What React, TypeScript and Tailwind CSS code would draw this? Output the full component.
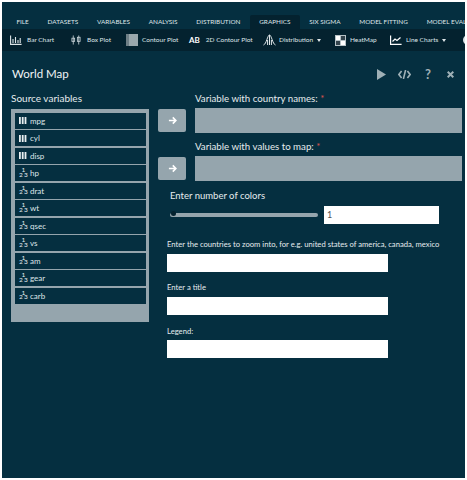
import React from "react";

const Bars = () => (
  <svg width="8" height="7" viewBox="0 0 8 7" className="shrink-0" fill="#e8eef0">
    <rect x="0" y="0" width="1.8" height="7" />
    <rect x="2.8" y="0" width="1.8" height="7" />
    <rect x="5.6" y="0" width="1.8" height="7" />
  </svg>
);

const Frac = () => (
  <span className="relative inline-block w-[8px] h-[10px] shrink-0 text-[6.5px] leading-none text-[#e8eef0]">
    <span className="absolute left-0 top-[3.5px]">2</span>
    <span className="absolute left-[2.5px] top-[-1px]">1</span>
    <span className="absolute left-[5px] top-[3.5px]">3</span>
  </span>
);

const Arrow = () => (
  <button className="w-[28px] h-[23px] mt-[1px] bg-[#95a5ad] rounded-[2px] flex items-center justify-center shrink-0">
    <svg width="9" height="9" viewBox="0 0 10 10" fill="none" stroke="#ffffff" strokeWidth="1.8">
      <path d="M1 5h7.5M5.3 1.6 8.7 5 5.3 8.4" />
    </svg>
  </button>
);

const tabs = ["FILE", "DATASETS", "VARIABLES", "ANALYSIS", "DISTRIBUTION", "GRAPHICS", "SIX SIGMA", "MODEL FITTING", "MODEL EVALUATION"];
const vars: [string, boolean][] = [
  ["mpg", true], ["cyl", true], ["disp", true], ["hp", false], ["drat", false], ["wt", false],
  ["qsec", false], ["vs", false], ["am", false], ["gear", false], ["carb", false],
];

const Tool = ({ icon, label, caret, w }: { icon: React.ReactNode; label: string; caret?: boolean; w: string }) => (
  <div className={`flex items-center shrink-0 ${w}`}>
    {icon}
    <span className="text-[6.5px] text-[#dfe6e9] whitespace-nowrap">{label}</span>
    {caret && <span className="ml-[4px] w-0 h-0 border-x-[2.5px] border-x-transparent border-t-[3px] border-t-[#dfe6e9]" />}
  </div>
);

export default function App() {
  return (
    <div className="w-[467px] h-[480px] bg-white p-[2px] overflow-hidden" style={{ fontFamily: "Lato, 'Open Sans', sans-serif" }}>
      <div className="w-[463px] h-[476px] bg-[#052f40] overflow-hidden text-[#e6ecee]">
        {/* tabs */}
        <div className="h-[27px] pt-[13px] pl-[5px] flex items-stretch text-[6.4px] whitespace-nowrap text-[#dfe6e9]">
          {tabs.map((t) => (
            <div
              key={t}
              className={`flex items-center px-[9.4px] shrink-0 rounded-t-[2px] ${t === "GRAPHICS" ? "bg-[#04222f]" : ""}`}
            >
              {t}
            </div>
          ))}
        </div>
        {/* toolbar */}
        <div className="h-[22px] bg-[#04222f] flex items-center pl-[8px] overflow-hidden">
          <Tool w="w-[61px]" label="Bar Chart" icon={
            <svg width="12" height="10" viewBox="0 0 12 10" className="mr-[5px]" fill="none" stroke="#dfe6e9" strokeWidth="1.1">
              <path d="M.6.5v8.9h11M3 8V4M5.5 8V2M8 8V5M10.2 8V3" />
            </svg>} />
          <Tool w="w-[55px]" label="Box Plot" icon={
            <svg width="10" height="10" viewBox="0 0 11 10" className="mr-[6px]" fill="none" stroke="#c9d4d8" strokeWidth=".9">
              <path d="M2.5 0v10M8.5 0v10" /><rect x="1" y="3" width="3" height="3.5" /><rect x="7" y="2" width="3" height="4.5" />
            </svg>} />
          <Tool w="w-[63px]" label="Contour Plot" icon={
            <span className="w-[12px] h-[12px] mr-[4px] bg-[#9aa7ac] shrink-0 border-l-[3px] border-[#6f7f86]" />} />
          <Tool w="w-[74px]" label="2D Contour Plot" icon={
            <span className="text-[8px] font-bold text-white mr-[6px]">AB</span>} />
          <Tool w="w-[72px]" label="Distribution" caret icon={
            <svg width="13" height="12" viewBox="0 0 13 12" className="mr-[3px]" fill="none" stroke="#dfe6e9" strokeWidth="1">
              <path d="M.5 11C3.5 10 4.5 1 6.5 1s3 9 6 10M4.6 11V6M8.4 11V6M6.5 11V1" />
            </svg>} />
          <Tool w="w-[55px]" label="HeatMap" icon={
            <span className="w-[11px] h-[11px] mr-[4px] bg-[#b7c2c6] shrink-0 grid grid-cols-2 gap-[1px] p-[1px]">
              <span className="bg-white" /><span className="bg-[#33434c]" /><span className="bg-[#33434c]" /><span className="bg-white" />
            </span>} />
          <Tool w="w-[73px]" label="Line Charts" caret icon={
            <svg width="12" height="10" viewBox="0 0 12 10" className="mr-[4px]" fill="none" stroke="#ffffff" strokeWidth="1.2">
              <path d="M.6.5v8.9h11M2.5 6.5l2.5-2.5 2 1.5 3.5-3" />
            </svg>} />
          <span className="w-[5px] h-[10px] bg-[#dfe6e9] rounded-l-full shrink-0" />
        </div>
        {/* header */}
        <div className="flex items-center justify-between h-[22px] mt-[12px] pl-[10px] pr-[11px]">
          <span className="text-[11.5px] text-[#f0f4f5]">World Map</span>
          <div className="flex items-center">
            <svg width="9" height="11" viewBox="0 0 9 11" fill="#9fb0b6" className="mr-[12px]"><path d="M0 0l9 5.5L0 11z" /></svg>
            <svg width="13" height="9" viewBox="0 0 13 9" fill="none" stroke="#9fb0b6" strokeWidth="1.6" className="mr-[14px]">
              <path d="M3.6 1 .9 4.5l2.7 3.5M9.4 1l2.7 3.5L9.4 8M7.6 0 5.4 9" />
            </svg>
            <span className="text-[13px] font-bold leading-none text-[#9fb0b6] w-[7px] mr-[15px]">?</span>
            <svg width="7" height="7" viewBox="0 0 7 7" fill="none" stroke="#9fb0b6" strokeWidth="2">
              <path d="M.7.7l5.6 5.6M6.3.7.7 6.3" />
            </svg>
          </div>
        </div>
        {/* body */}
        <div className="flex mt-[7px] pl-[9px]">
          <div className="w-[138px] shrink-0">
            <div className="text-[10px] leading-[12px] h-[17px] text-[#e6ecee]">Source variables</div>
            <div className="h-[213px] bg-[#95a5ad] px-[3.5px] pt-[3.5px] flex flex-col gap-[1.5px] shrink-0">
              {vars.map(([name, nominal]) => (
                <div key={name} className="h-[16px] bg-[#052f40] flex items-center pl-[4.5px] gap-[3px] text-[8px] text-[#dfe6e9] shrink-0">
                  {nominal ? <Bars /> : <Frac />}
                  <span>{name}</span>
                </div>
              ))}
            </div>
          </div>
          <div className="flex-1 pl-[9px]">
            <div className="flex flex-col">
              <div className="pl-[37px] text-[9.7px] leading-[12px] h-[16px]">Variable with country names: <span className="text-[#d9534f]">*</span></div>
              <div className="flex gap-[8.5px] items-start">
                <Arrow />
                <div className="w-[267px] h-[25px] bg-[#95a5ad]" />
              </div>
              <div className="pl-[37px] text-[9.7px] leading-[12px] h-[16px] mt-[7px]">Variable with values to map: <span className="text-[#d9534f]">*</span></div>
              <div className="flex gap-[8.5px] items-start">
                <Arrow />
                <div className="w-[267px] h-[25px] bg-[#95a5ad]" />
              </div>
            </div>
            <div className="pl-[12px] mt-[8px] text-[9.5px] leading-[14px]">Enter number of colors</div>
            <div className="flex items-center pl-[12px] mt-[3px]">
              <div className="relative w-[148px] h-[4px] mb-[1px] bg-[#95a5ad] rounded-full">
                <span className="absolute left-[0.5px] top-[-2px] w-[5px] h-[5px] bg-[#04222f] rounded-full" />
              </div>
              <div className="ml-[6px] w-[115px] h-[18px] bg-white text-[9px] text-[#555] pl-[3px] leading-[18px]">1</div>
            </div>
            <div className="pl-[9px] flex flex-col">
              <div className="mt-[14px] h-[16px] text-[7.67px] leading-[12px] whitespace-nowrap">Enter the countries to zoom into, for e.g. united states of america, canada, mexico</div>
              <div className="w-[221px] h-[18px] bg-white" />
              <div className="mt-[9px] h-[16px] text-[7.67px] leading-[12px]">Enter a title</div>
              <div className="w-[221px] h-[18px] bg-white" />
              <div className="mt-[10px] h-[15px] text-[7.67px] leading-[12px]">Legend:</div>
              <div className="w-[221px] h-[18px] bg-white" />
            </div>
          </div>
        </div>
      </div>
    </div>
  );
}
